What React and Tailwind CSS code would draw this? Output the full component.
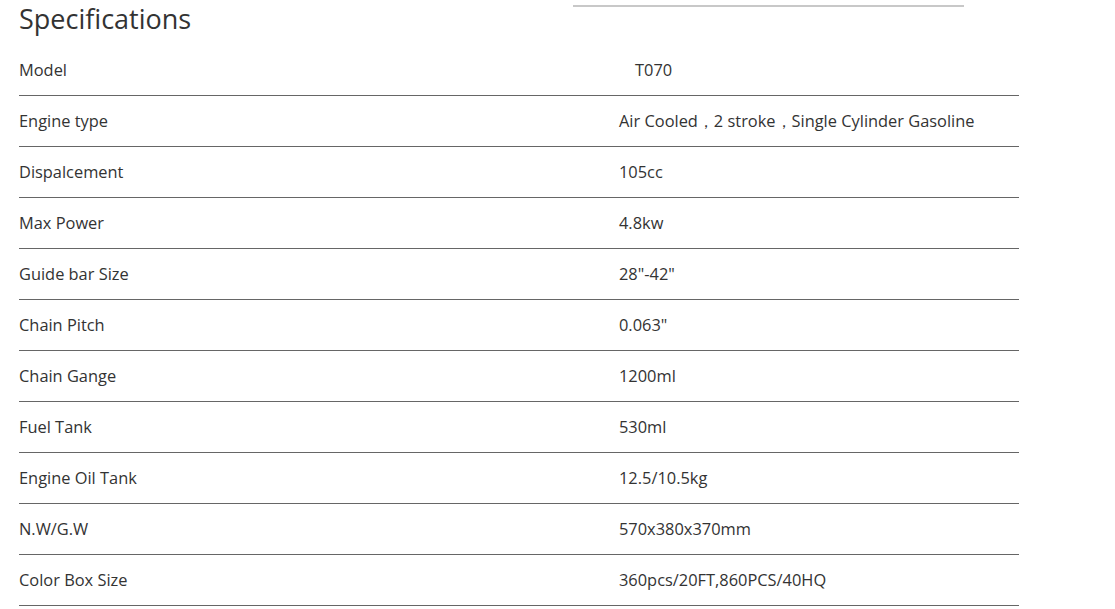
import React from 'react'

const specs = [
  ['Model', 'T070', true],
  ['Engine type', 'Air Cooled，2 stroke，Single Cylinder Gasoline'],
  ['Dispalcement', '105cc'],
  ['Max Power', '4.8kw'],
  ['Guide bar Size', '28"-42"'],
  ['Chain Pitch', '0.063"'],
  ['Chain Gange', '1200ml'],
  ['Fuel Tank', '530ml'],
  ['Engine Oil Tank', '12.5/10.5kg'],
  ['N.W/G.W', '570x380x370mm'],
  ['Color Box Size', '360pcs/20FT,860PCS/40HQ'],
]

const SpecRow = ({ label, value, indent }) => (
  <div className="flex h-[51px] items-center border-b border-[#666666]">
    <div className="w-[600px] pt-[1px]">{label}</div>
    <div className={`pt-[1px] ${indent ? 'pl-4' : ''}`}>{value}</div>
  </div>
)

export default function App() {
  return (
    <div
      className="min-h-[609px] bg-white text-[#333333] text-[16.4px]"
      style={{ fontFamily: '"Open Sans", "Noto Sans", Arial, sans-serif' }}
    >
      <div className="ml-[19px] w-[1000px]">
        <div className="flex h-[45px] items-start">
          <h2 className="w-[554px] text-[27px] leading-[38px] font-normal">Specifications</h2>
          <div className="mt-[5px] h-[2px] w-[391px] bg-[#c8c8c8]"></div>
        </div>
        {specs.map(([label, value, indent]) => (
          <SpecRow key={label} label={label} value={value} indent={indent} />
        ))}
      </div>
    </div>
  )
}
